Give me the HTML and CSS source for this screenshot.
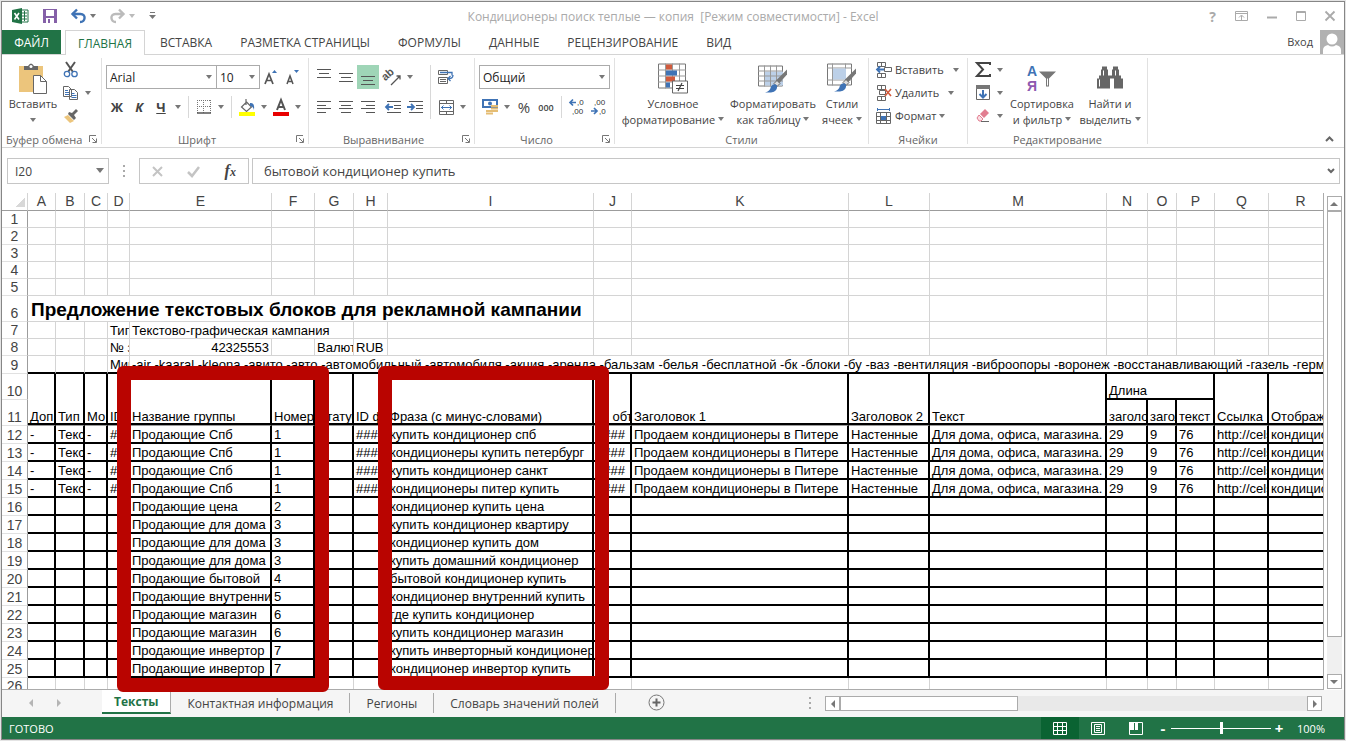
FILE: index.html
```html
<!DOCTYPE html>
<html lang="ru">
<head>
    <meta charset="UTF-8">
    <meta name="viewport" content="width=device-width, initial-scale=1.0">
    <title>Кондиционеры поиск теплые — копия - Excel</title>
    <link rel="stylesheet" href="styles.css">
</head>

<body>
    <div class="window">
        <header class="titlebar">
            <div class="quick">
                <svg width="17" height="16" viewBox="0 0 17 16"><path d="M9 2h7v12H9z" fill="#fff" stroke="#217346"/><path d="M10 5h5M10 8h5M10 11h5M12.500 3v10" stroke="#217346"/><path d="M0 2l10-2v16L0 14z" fill="#217346"/><path d="M2.500 5l4.500 6.500M7 5l-4.500 6.500" stroke="#fff" stroke-width="1.600"/></svg>
                <button class="plain" aria-label="Сохранить"><svg width="14" height="14" viewBox="0 0 14 14"><path d="M0 0h14v14H0z" fill="#8560a8"/><path d="M3 1h8v6H3zM3 9h8v5H3z" fill="#fff"/><path d="M5 10h2v4H5z" fill="#8560a8"/></svg></button>
                <button class="plain" aria-label="Отменить"><svg width="15" height="14" viewBox="0 0 15 14"><path d="M1.500 5h8c6 0 5 8-.5 8" fill="none" stroke="#3f73b5" stroke-width="2.400"/><path d="M6 .5L1.500 5 6 9.500" fill="none" stroke="#3f73b5" stroke-width="2.400"/></svg><i class="caret"></i></button>
                <button class="plain pale" aria-label="Вернуть"><svg width="15" height="14" viewBox="0 0 15 14"><path d="M13.500 5h-8c-6 0-5 8 .5 8M9 .5L13.500 5 9 9.500" fill="none" stroke="#bbb" stroke-width="2.400"/></svg><i class="caret"></i></button>
                <button class="plain" aria-label="Настройка панели"><svg width="7" height="8" viewBox="0 0 7 8"><path d="M1 .5h5" stroke="#777"/><path d="M0 3h7L3.500 7z" fill="#777"/></svg></button>
            </div>
            <div class="title">Кондиционеры поиск теплые — копия&nbsp; [Режим совместимости] - Excel</div>
            <div class="winbuttons">
                <button class="plain help">?</button>
                <button class="plain" aria-label="Лента"><svg width="13" height="10" viewBox="0 0 13 10"><path d="M.5.5h12v9H.5zM.5 2.500h12M6.500 9V4.500M4 6.500l2.500-2.500L9 6.500" fill="none" stroke="#aaa"/></svg></button>
                <button class="plain" aria-label="Свернуть"><svg width="10" height="10" viewBox="0 0 10 10"><path d="M0 6.500h10" stroke="#aaa" stroke-width="2"/></svg></button>
                <button class="plain" aria-label="Развернуть"><svg width="10" height="10" viewBox="0 0 10 10"><path d="M.5.5h9v9h-9zM0 1.500h10" fill="none" stroke="#aaa"/></svg></button>
                <button class="plain" aria-label="Закрыть"><svg width="10" height="10" viewBox="0 0 10 10"><path d="M.5.5l9 9M9.500.5l-9 9" stroke="#aaa" stroke-width="1.800"/></svg></button>
            </div>
        </header>

        <nav class="tabs">
            <button class="tab file">ФАЙЛ</button>
            <button class="tab active">ГЛАВНАЯ</button>
            <button class="tab">ВСТАВКА</button>
            <button class="tab">РАЗМЕТКА СТРАНИЦЫ</button>
            <button class="tab">ФОРМУЛЫ</button>
            <button class="tab">ДАННЫЕ</button>
            <button class="tab">РЕЦЕНЗИРОВАНИЕ</button>
            <button class="tab">ВИД</button>
            <a class="login" href="#">Вход</a>
            <svg width="24" height="24" viewBox="0 0 24 24"><path d="M0 0h24v24H0z" fill="#b1b1b1"/><circle cx="12" cy="9" r="5.500" fill="#fff"/><path d="M3 24v-4q0-4 5-5 4 3 8 0 5 1 5 5v4z" fill="#fff"/></svg>
        </nav>

        <div class="ribbon">
            <section class="group clipboard">
                <div class="body">
                    <button class="big">
                        <svg width="28" height="32" viewBox="0 0 28 32"><path d="M0 3h24v26H0z" fill="#ecc57c"/><path d="M5 7V3h4q3-5 6 0h4v4z" fill="#666"/><circle cx="12" cy="3.500" r="1.500" fill="#fff"/><path d="M14.500 12.500h7l6 6v12h-13z" fill="#fff" stroke="#666"/><path d="M21.500 12.500v6h6" fill="none" stroke="#666"/></svg>
                        <span>Вставить</span><i class="caret"></i>
                    </button>
                    <div class="stack">
                        <div class="row"><button class="tool" aria-label="Вырезать"><svg width="16" height="16" viewBox="0 0 16 16"><path d="M3 0l7 10M12 0L5 10" stroke="#555" stroke-width="2"/><circle cx="4" cy="12" r="2.700" fill="none" stroke="#3f73b5" stroke-width="1.300"/><circle cx="11.500" cy="12" r="2.700" fill="none" stroke="#3f73b5" stroke-width="1.300"/></svg></button></div>
                        <div class="row"><button class="tool" aria-label="Копировать"><svg width="16" height="14" viewBox="0 0 16 14"><path d="M.5.5h5l3 3v7h-8zM6.500 3.500h5l3 3v7h-8z" fill="#fff" stroke="#666"/><path d="M2 4.500h3M2 6.500h4M2 8.500h4M8.500 7.500h3M8.500 9.500h5M8.500 11.500h5" stroke="#3f73b5"/></svg></button><i class="caret drop"></i></div>
                        <div class="row"><button class="tool" aria-label="Формат по образцу"><svg width="16" height="14" viewBox="0 0 16 14"><path d="M1 8l4-2 6 6-4 2z" fill="#ecc57c"/><path d="M5 5l6 6 2-2-2-3 4-4-2-2-4 4-3-1z" fill="#666"/></svg></button></div>
                    </div>
                </div>
                <footer><span>Буфер обмена</span><svg class="launch" width="8" height="8" viewBox="0 0 8 8"><path d="M.5 7V.5H7M3 3l4 4M7.500 3.500v4h-4" fill="none" stroke="#777"/></svg></footer>
            </section>

            <section class="group font">
                <div class="body lines">
                    <div class="row">
                        <span class="combo name"><select aria-label="Шрифт"><option>Arial</option></select></span>
                        <span class="combo size"><select aria-label="Размер"><option>10</option></select></span>
                        <button class="tool" aria-label="Увеличить"><svg width="14" height="16" viewBox="0 0 14 16"><path d="M1 15L5 5l4 10M2.500 11.500h5" fill="none" stroke="#555" stroke-width="1.700"/><path d="M8 4l2.500-3L13 4z" fill="#3f73b5"/></svg></button>
                        <button class="tool" aria-label="Уменьшить"><svg width="14" height="16" viewBox="0 0 14 16"><path d="M1 15l3-8 3 8M2 12.500h4" fill="none" stroke="#555" stroke-width="1.500"/><path d="M8 1h5l-2.500 3z" fill="#3f73b5"/></svg></button>
                    </div>
                    <div class="row">
                        <button class="tool letter">Ж</button><button class="tool letter"><em>К</em></button><button class="tool letter"><u>Ч</u></button><i class="caret drop"></i>
                        <i class="sep"></i>
                        <button class="tool" aria-label="Границы"><svg width="14" height="14" viewBox="0 0 14 14"><path d="M0 .5h14M.5 0v13M13.500 0v13M6.500 0v13M0 6.500h14" stroke="#777" stroke-dasharray="1 1"/><path d="M0 13h14" stroke="#555" stroke-width="1.500"/></svg></button><i class="caret drop"></i>
                        <i class="sep"></i>
                        <button class="tool" aria-label="Заливка"><svg width="17" height="17" viewBox="0 0 17 17"><path d="M7.500 3l5 5-5 4.500-5-4.500zM7 6V0" fill="#fff" stroke="#666" stroke-width="1.200"/><path d="M11 4q5-1 4 7-1-4-4-4z" fill="#3f73b5"/><path d="M0 13h16v4H0z" fill="#ff0"/></svg></button><i class="caret drop"></i>
                        <button class="tool" aria-label="Цвет текста"><svg width="16" height="17" viewBox="0 0 16 17"><path d="M4 11l4-10 4 10M5.500 8h5" fill="none" stroke="#555" stroke-width="2"/><path d="M0 13h16v4H0z" fill="#e80000"/></svg></button><i class="caret drop"></i>
                    </div>
                </div>
                <footer><span>Шрифт</span><svg class="launch" width="8" height="8" viewBox="0 0 8 8"><path d="M.5 7V.5H7M3 3l4 4M7.500 3.500v4h-4" fill="none" stroke="#777"/></svg></footer>
            </section>

            <section class="group align">
                <div class="body">
                    <div class="lines">
                        <div class="row">
                            <button class="tool" aria-label="По верхнему краю"><svg width="14" height="16" viewBox="0 0 14 16"><path d="M0 .5h14M2 4.500h10M0 8.500h14" stroke="#555"/></svg></button>
                            <button class="tool" aria-label="По середине"><svg width="14" height="16" viewBox="0 0 14 16"><path d="M0 4.500h14M2 8.500h10M0 12.500h14" stroke="#555"/></svg></button>
                            <button class="tool on" aria-label="По нижнему краю"><svg width="14" height="16" viewBox="0 0 14 16"><path d="M0 7.500h14M2 11.500h10M0 15.500h14" stroke="#555"/></svg></button>
                            <button class="tool turn" aria-label="Ориентация"><svg width="17" height="15" viewBox="0 0 17 15"><text x="-1" y="8" font-size="11" font-weight="bold" fill="#555" transform="rotate(-42 4 8)">ab</text><path d="M6 15L15 6M11.500 6H15v3.500" fill="none" stroke="#555" stroke-width="1.300"/></svg></button><i class="caret drop"></i>
                        </div>
                        <div class="row">
                            <button class="tool" aria-label="По левому краю"><svg width="14" height="12" viewBox="0 0 14 12"><path d="M0 .5h14M0 4.500h9M0 7.500h14M0 11.500h9" stroke="#555"/></svg></button>
                            <button class="tool" aria-label="По центру"><svg width="14" height="12" viewBox="0 0 14 12"><path d="M0 .5h14M2 4.500h10M0 7.500h14M2 11.500h10" stroke="#555"/></svg></button>
                            <button class="tool" aria-label="По правому краю"><svg width="14" height="12" viewBox="0 0 14 12"><path d="M0 .5h14M5 4.500h9M0 7.500h14M5 11.500h9" stroke="#555"/></svg></button>
                            <button class="tool turn" aria-label="Уменьшить отступ"><svg width="16" height="12" viewBox="0 0 16 12"><path d="M2 .5h14M9 4.500h7M9 7.500h7M2 11.500h14" stroke="#555"/><path d="M1 6h7M4 3L1 6l3 3" fill="none" stroke="#3f73b5" stroke-width="1.800"/></svg></button>
                            <button class="tool" aria-label="Увеличить отступ"><svg width="16" height="12" viewBox="0 0 16 12"><path d="M2 .5h14M9 4.500h7M9 7.500h7M2 11.500h14" stroke="#555"/><path d="M0 6h7M4 3l3 3-3 3" fill="none" stroke="#3f73b5" stroke-width="1.800"/></svg></button>
                        </div>
                    </div>
                    <i class="sep tall"></i>
                    <div class="lines">
                        <div class="row"><button class="tool" aria-label="Перенести текст"><svg width="16" height="15" viewBox="0 0 16 15"><path d="M.5.5h9v4h-9zM.5 7.500h9v6h-9zM2 9.500h6M2 11.500h6" fill="none" stroke="#666"/><path d="M2 2.500h12v3M2 2.500h6M15 5q0 4-5 3.500M12.500 6L10 8.500l2.500 2.500" fill="none" stroke="#3f73b5" stroke-width="1.300"/></svg></button></div>
                        <div class="row"><button class="tool" aria-label="Объединить"><svg width="15" height="15" viewBox="0 0 15 15"><path d="M.5.5h14v14H.5zM.5 3.500h14M.5 11.500h14M7.500.5v3M7.500 11.500v3" fill="none" stroke="#666"/><path d="M2 7.500h11M4.500 5.500l-2 2 2 2M10.500 5.500l2 2-2 2" fill="none" stroke="#3f73b5"/></svg></button><i class="caret drop"></i></div>
                    </div>
                </div>
                <footer><span>Выравнивание</span><svg class="launch" width="8" height="8" viewBox="0 0 8 8"><path d="M.5 7V.5H7M3 3l4 4M7.500 3.500v4h-4" fill="none" stroke="#777"/></svg></footer>
            </section>

            <section class="group number">
                <div class="body lines">
                    <div class="row"><span class="combo format"><select aria-label="Числовой формат"><option>Общий</option></select></span></div>
                    <div class="row">
                        <button class="tool" aria-label="Денежный формат"><svg width="17" height="16" viewBox="0 0 17 16"><path d="M1 1h14v7H1z" fill="#fff" stroke="#3f73b5" stroke-width="2"/><circle cx="8" cy="4.500" r="2" fill="#3f73b5"/><path d="M9 7h7M9 9.500h7M4 12h7M9 12h7M4 14.500h7" stroke="#e5bd74" stroke-width="2"/></svg></button><i class="caret drop"></i>
                        <button class="tool percent">%</button><button class="tool zeros">000</button>
                        <i class="sep"></i>
                        <button class="tool" aria-label="Увеличить разрядность"><svg width="16" height="16" viewBox="0 0 16 16"><path d="M1 3.500h6M4 .5l-3 3 3 3" fill="none" stroke="#3f73b5" stroke-width="1.700"/><text x="8" y="6" font-size="8" fill="#333">,0</text><text x="3" y="15" font-size="8" fill="#333">,00</text></svg></button>
                        <button class="tool" aria-label="Уменьшить разрядность"><svg width="16" height="16" viewBox="0 0 16 16"><text x="3" y="6" font-size="8" fill="#333">,00</text><path d="M0 12h6M3 9l3 3-3 3" fill="none" stroke="#3f73b5" stroke-width="1.700"/><text x="8" y="15" font-size="8" fill="#333">,0</text></svg></button>
                    </div>
                </div>
                <footer><span>Число</span><svg class="launch" width="8" height="8" viewBox="0 0 8 8"><path d="M.5 7V.5H7M3 3l4 4M7.500 3.500v4h-4" fill="none" stroke="#777"/></svg></footer>
            </section>

            <section class="group looks">
                <div class="body">
                    <button class="big wide">
                        <svg width="30" height="31" viewBox="0 0 30 31"><path d="M.5.5h27v24H.5z" fill="#fff" stroke="#777"/><path d="M0 6.500h28M0 12.500h28M0 18.500h28M7.500 0v25M14.500 0v25M21.500 0v25" stroke="#999"/><path d="M8 1h6v5H8zM8 13h9v5H8z" fill="#d05a3c"/><path d="M8 7h11v5H8zM8 19h4v5H8z" fill="#3f73b5"/><path d="M14.500 17.500h15v12h-15z" fill="#fff" stroke="#666"/><path d="M18 22h8M18 25h8M24 19.500l-4 8" stroke="#444" stroke-width="1.200"/></svg>
                        <span>Условное</span><span>форматирование<i class="caret"></i></span>
                    </button>
                    <button class="big mid">
                        <svg width="30" height="31" viewBox="0 0 30 31"><path d="M.5 2.500h24v20H.5z" fill="#fff" stroke="#777"/><path d="M7 8h18v14H7z" fill="#bcd0e8"/><path d="M0 7.500h25M0 12.500h25M0 17.500h25M6.500 2v21M12.500 2v21M18.500 2v21" stroke="#999"/><path d="M29 6v5l-8 9-3-3z" fill="#777"/><path d="M19 17l3 3-3 3-3-3z" fill="#ddd" stroke="#666"/><path d="M7 29q5-1 6-6 3-4 6-1 1 6-6 7z" fill="#3f73b5"/></svg>
                        <span>Форматировать</span><span>как таблицу<i class="caret"></i></span>
                    </button>
                    <button class="big narrow">
                        <svg width="30" height="31" viewBox="0 0 30 31"><path d="M.5.5h24v21H.5z" fill="#fff" stroke="#777"/><path d="M0 4.500h25M0 16.500h25M5.500 0v22M18.500 0v22" stroke="#999"/><path d="M6 5h13v11H6z" fill="#bcd0e8"/><path d="M29 5v5l-8 9-3-3z" fill="#777"/><path d="M19 16l3 3-3 3-3-3z" fill="#ddd" stroke="#666"/><path d="M7 28q5-1 6-6 3-4 6-1 1 6-6 7z" fill="#3f73b5"/></svg>
                        <span>Стили</span><span>ячеек<i class="caret"></i></span>
                    </button>
                </div>
                <footer><span>Стили</span></footer>
            </section>

            <section class="group cells">
                <div class="body">
                    <div class="stack">
                        <button class="item"><svg width="16" height="16" viewBox="0 0 16 16"><path d="M1.500.5h8v4h-8zM5.500.5v4M1.500 11.500h8v4h-8zM5.500 11.500v4M8.500 5.500h7v4h-7z" fill="#fff" stroke="#666"/><path d="M1 7.500h7M4 4.500l-3 3 3 3" fill="none" stroke="#3f73b5" stroke-width="1.800"/></svg><span>Вставить</span><i class="caret"></i></button>
                        <button class="item"><svg width="16" height="16" viewBox="0 0 16 16"><path d="M1.500.5h8v4h-8zM5.500.5v4M1.500 11.500h8v4h-8zM5.500 11.500v4M3.500 5.500h6v4h-6z" fill="#fff" stroke="#666"/><path d="M9 4l6 7M15 4l-6 7" stroke="#d05a3c" stroke-width="1.600"/></svg><span>Удалить</span><i class="caret"></i></button>
                        <button class="item"><svg width="16" height="16" viewBox="0 0 16 16"><path d="M.5 4.500h14v11H.5zM.5 8.500h14M.5 12.500h14M4.500 4.500v11M10.500 4.500v11" fill="#fff" stroke="#666"/><path d="M5 8h5v4H5z" fill="#3f73b5"/><path d="M1.500 0v3M13.500 0v3M2 1.500h11" stroke="#3f73b5"/></svg><span>Формат</span><i class="caret close"></i></button>
                    </div>
                </div>
                <footer><span>Ячейки</span></footer>
            </section>

            <section class="group edit">
                <div class="body">
                    <div class="stack">
                        <div class="row"><button class="tool" aria-label="Сумма"><svg width="16" height="15" viewBox="0 0 16 15"><path d="M15 3V1H2l6 6.500L2 14h13v-2" fill="none" stroke="#444" stroke-width="2"/></svg></button><i class="caret drop"></i></div>
                        <div class="row"><button class="tool" aria-label="Заполнить"><svg width="14" height="15" viewBox="0 0 14 15"><path d="M.5.5h13v14H.5z" fill="#fff" stroke="#666"/><path d="M0 0h14v4H0z" fill="#777"/><path d="M7 5v7M3.500 9L7 12.500 10.500 9" fill="none" stroke="#3f73b5" stroke-width="2"/></svg></button><i class="caret drop"></i></div>
                        <div class="row"><button class="tool" aria-label="Очистить"><svg width="14" height="13" viewBox="0 0 14 13"><path d="M4 5l5-5 4 4-5 5z" fill="#e27d90"/><path d="M3 6l4 4-2 2H3L1 9z" fill="#fbdde2" stroke="#e27d90"/><path d="M5 12.500h8" stroke="#666"/></svg></button><i class="caret drop"></i></div>
                    </div>
                    <button class="big sort">
                        <svg width="30" height="31" viewBox="0 0 30 31"><text x="0" y="12" font-size="14" font-weight="bold" fill="#3f73b5">А</text><text x="0" y="27" font-size="14" font-weight="bold" fill="#8e59b0">Я</text><path d="M12 8h17l-7 7v8h-3v-8z" fill="#777"/><path d="M20.500 15v7" stroke="#fff"/></svg>
                        <span>Сортировка</span><span>и фильтр<i class="caret"></i></span>
                    </button>
                    <button class="big find">
                        <svg width="26" height="31" viewBox="0 0 26 31"><path d="M5 3h5v3h1v6h4V6h1V3h5v3h1v6h2v3h2v10h-9v-10h-4v10H0V15h2v-3h2V6h1z" fill="#666"/><path d="M2.500 16v7M16.500 17v6M6.500 7v5M18.500 7v5" stroke="#fff"/></svg>
                        <span>Найти и</span><span>выделить<i class="caret"></i></span>
                    </button>
                </div>
                <footer><span>Редактирование</span></footer>
            </section>
            <button class="plain collapse" aria-label="Свернуть ленту"><svg width="9" height="6" viewBox="0 0 9 6"><path d="M1 5l3.500-3.500L8 5" fill="none" stroke="#666" stroke-width="2"/></svg></button>
        </div>

        <div class="formulabar">
            <span class="combo cellname"><input aria-label="Имя" value="I20"></span>
            <i class="dots"></i>
            <div class="fx">
                <button class="plain" aria-label="Отмена"><svg width="11" height="11" viewBox="0 0 11 11"><path d="M1 1l9 9M10 1l-9 9" stroke="#c4c4c4" stroke-width="2"/></svg></button>
                <button class="plain" aria-label="Ввод"><svg width="13" height="11" viewBox="0 0 13 11"><path d="M1 6l4 4 7-9" fill="none" stroke="#c4c4c4" stroke-width="2.500"/></svg></button>
                <button class="plain fn">f<small>x</small></button>
            </div>
            <div class="formula">
                <input aria-label="Формула" value="бытовой кондиционер купить">
                <svg width="8" height="6" viewBox="0 0 8 6"><path d="M1 1l3 3 3-3" fill="none" stroke="#666" stroke-width="2"/></svg>
            </div>
        </div>

        <main class="work">
            <div class="sheet">
                <table id="grid">
                    <colgroup></colgroup>
                    <thead></thead>
                    <tbody></tbody>
                </table>
            </div>
            <div class="vscroll">
                <button class="arrow" aria-label="Вверх"><i class="up"></i></button>
                <div class="vtrack"><div class="vthumb"></div></div>
                <button class="arrow" aria-label="Вниз"><i class="down"></i></button>
            </div>
            <div class="mark groups"></div>
            <div class="mark phrases"></div>
        </main>

        <div class="sheetbar">
            <div class="nav"><i class="left"></i><i class="right"></i></div>
            <button class="sheettab current">Тексты</button>
            <button class="sheettab">Контактная информация</button>
            <button class="sheettab">Регионы</button>
            <button class="sheettab">Словарь значений полей</button>
            <button class="plain add" aria-label="Новый лист"><svg width="17" height="17" viewBox="0 0 17 17"><circle cx="8.500" cy="8.500" r="7.500" fill="none" stroke="#777"/><path d="M4.500 8.500h8M8.500 4.500v8" stroke="#666" stroke-width="2"/></svg></button>
            <i class="dots"></i>
            <div class="hscroll">
                <button class="arrow" aria-label="Влево"><i class="left"></i></button>
                <div class="hthumb"></div>
                <button class="arrow" aria-label="Вправо"><i class="right"></i></button>
            </div>
        </div>

        <footer class="status">
            <span class="ready">ГОТОВО</span>
            <button class="view on" aria-label="Обычный"><svg width="14" height="13" viewBox="0 0 14 13"><path d="M.5.5h13v12H.5zM.5 4.500h13M.5 8.500h13M4.500.5v12M9.500.5v12" fill="none" stroke="#fff"/></svg></button>
            <button class="view" aria-label="Разметка"><svg width="14" height="13" viewBox="0 0 14 13"><path d="M.5.5h13v12H.5zM3.500 2.500h7v8h-7zM5 4.500h4M5 6.500h4M5 8.500h4" fill="none" stroke="#fff"/></svg></button>
            <button class="view" aria-label="Страничный"><svg width="14" height="13" viewBox="0 0 14 13"><path d="M.5.5h13v12H.5z" fill="none" stroke="#fff"/><path d="M0 0h5v8H0zM6 0h3v8H6z" fill="#fff"/></svg></button>
            <button class="zoombtn">-</button>
            <input class="zoom" type="range" min="0" max="100" value="50" aria-label="Масштаб">
            <button class="zoombtn">+</button>
            <span class="percentage">100%</span>
        </footer>
    </div>

    <script>
        const widths = [26, 28, 29, 23, 22, 142, 43, 39, 34, 206, 38, 217, 81, 177, 41, 29, 38, 54, 64];
        const letters = "ABCDEFGHIJKLMNOPQR".split("");

        const groups = ["Спб", "Спб", "Спб", "Спб", "цена", "для дома", "для дома", "для дома", "бытовой",
            "внутренний", "магазин", "магазин", "инвертор", "инвертор"];
        const numbers = [1, 1, 1, 1, 2, 3, 3, 3, 4, 5, 6, 6, 7, 7];
        const phrases = ["купить кондиционер спб", "кондиционеры купить петербург", "купить кондиционер санкт",
            "кондиционеры питер купить", "кондиционер купить цена", "купить кондиционер квартиру",
            "кондиционер купить дом", "купить домашний кондиционер", "бытовой кондиционер купить",
            "кондиционер внутренний купить", "где купить кондиционер", "купить кондиционер магазин",
            "купить инверторный кондиционер", "кондиционер инвертор купить"];
        const minus = "-air -kaaral -kleona -авито -авто -автомобильный -автомобиля -акция -аренда -бальзам -белья " +
            "-бесплатной -бк -блоки -бу -ваз -вентиляция -виброопоры -воронеж -восстанавливающий -газель -герметик";

        const td = (text = "", attrs = "") => `<td ${attrs}>${text}</td>`;
        const empty = n => td().repeat(n);
        const row = (n, cells, cls = "") => `<tr class="${cls}"><th scope="row">${n}</th>${cells}</tr>`;

        document.querySelector("#grid colgroup").innerHTML = widths.map(w => `<col style="width:${w}px">`).join("");
        document.querySelector("#grid thead").innerHTML =
            `<tr><th class="corner"></th>${letters.map(l => `<th scope="col">${l}</th>`).join("")}</tr>`;

        let html = "";
        for (let i = 1; i <= 5; i++) html += row(i, empty(18));
        html += row(6, td("Предложение текстовых блоков для рекламной кампании", 'colspan="9"') + empty(9), "heading");
        html += row(7, empty(3) + td("Тип:") + td("Текстово-графическая кампания", 'colspan="3"') + empty(11));
        html += row(8, empty(3) + td("№ заказа") + td("42325553", 'class="num"') + empty(1) + td("Валюта") + td("RUB") + empty(10));
        html += row(9, empty(3) + td("Минус") + td(minus, 'colspan="14"'), "minus");

        // two-line table header
        const heads = ["Доп", "Тип", "Мо", "ID группы", "Название группы", "Номер", "Статус", "ID фразы",
            "Фраза (с минус-словами)", "ID объявления", "Заголовок 1", "Заголовок 2", "Текст"];
        html += row(10, heads.map(t => td(t, 'rowspan="2" class="freeze"')).join("") + td("Длина", 'colspan="3"') +
            td("Ссылка", 'rowspan="2" class="freeze"') + td("Отображаемая", 'rowspan="2" class="freeze"'), "bold head");
        html += row(11, ["заголовок", "заголовок", "текст"].map(t => td(t, 'class="freeze"')).join(""), "bold head");

        groups.forEach((g, i) => {
            const full = i < 4;
            const f = t => td(full ? t : "");
            html += row(12 + i, f("-") + f("Текстовое") + f("-") + f("##") +
                td("Продающие " + g) + td(numbers[i]) + td() + f("####") + td(phrases[i]) + f("####") +
                f("Продаем кондиционеры в Питере") + f("Настенные") + f("Для дома, офиса, магазина.") +
                f("29") + f("9") + f("76") + f("http://celsius") + f("кондиционеры"), "bold");
        });
        html += row(26, empty(18));
        document.querySelector("#grid tbody").innerHTML = html;
    </script>
</body>

</html>
```
FILE: styles.css
```css
* {
    box-sizing: border-box;
}
body {
    margin: 0;
    padding: 1px;
    height: 100vh;
    overflow: hidden;
    background-color: #e4e4e4;
    font-family: "Open Sans", "Noto Sans", sans-serif;
    font-size: 12px;
    color: #444;
}
button, input, select {
    margin: 0;
    padding: 0;
    border: 0;
    background: none;
    font: inherit;
    color: inherit;
}
svg {
    display: block;
    flex: none;
    overflow: visible;
}
svg text {
    font-family: "Liberation Sans", Arial, sans-serif;
}
.window {
    height: 100%;
    display: flex;
    flex-direction: column;
    background-color: #fff;
    border: 1px solid #868686;
}

/* small triangles */
.caret {
    flex: none;
    display: inline-block;
    border: 3px solid transparent;
    border-top: 4px solid #777;
    border-bottom: 0;
}
.pale .caret {
    border-top-color: #bbb;
}
.row .drop {
    margin: 0 3px;
}
.up, .down, .left, .right {
    display: block;
    border: 4px solid transparent;
}
.up {
    border-top: 0;
    border-bottom-color: #777;
}
.down {
    border-bottom: 0;
    border-top-color: #777;
}
.left {
    border-left: 0;
    border-right-color: #777;
}
.right {
    border-right: 0;
    border-left-color: #777;
}
.dots {
    width: 2px;
    height: 12px;
    background: repeating-linear-gradient(#aaa 0 2px, transparent 2px 5px);
}

/* title bar */
.titlebar {
    height: 28px;
    display: grid;
    grid-template-columns: 1fr auto 1fr;
    align-items: center;
}
.quick {
    display: flex;
    align-items: center;
    gap: 14px;
    padding-left: 10px;
}
.quick .plain {
    display: flex;
    align-items: center;
    gap: 4px;
}
.title {
    color: #aaa;
}
.winbuttons {
    display: flex;
    justify-content: flex-end;
    align-items: center;
    gap: 19px;
    padding-right: 9px;
}
.help {
    font-size: 14px;
    font-weight: bold;
    color: #aaa;
}

/* tabs */
.tabs {
    height: 25px;
    display: flex;
    align-items: stretch;
    border-bottom: 1px solid #d4d4d4;
}
.tab {
    padding: 0 14px;
}
.file {
    width: 59px;
    padding: 0;
    margin-right: 4px;
    background-color: #217346;
    color: #fff;
}
.tab.active {
    width: 80px;
    padding: 0;
    margin: 0 1px -1px 0;
    border: 1px solid #d4d4d4;
    border-bottom: 0;
    background-color: #fff;
    color: #217346;
}
.login {
    margin: 0 7px 0 auto;
    font-size: 11px;
    line-height: 24px;
    color: #444;
    text-decoration: none;
}

/* ribbon */
.ribbon {
    height: 93px;
    flex: none;
    display: flex;
    padding: 3px 0;
    border-bottom: 1px solid #d4d4d4;
    font-size: 11px;
}
.group {
    flex: none;
    display: flex;
    flex-direction: column;
    justify-content: space-between;
    border-right: 1px solid #e1e1e1;
}
.clipboard {
    width: 100px;
}
.font {
    width: 207px;
}
.align {
    width: 166px;
}
.number {
    width: 140px;
}
.looks {
    width: 254px;
}
.cells {
    width: 99px;
}
.edit {
    width: 180px;
}
.body {
    display: flex;
    padding-left: 4px;
}
.group footer {
    display: flex;
    align-items: center;
    justify-content: center;
    height: 16px;
    margin-bottom: -3px;
    padding: 0 4px;
    color: #666;
}
.group footer span {
    flex: 1;
    min-width: 0;
    text-align: center;
    white-space: nowrap;
}
.launch {
    margin-left: 8px;
}
.row {
    display: flex;
    align-items: center;
}
.lines {
    display: flex;
    flex-direction: column;
    gap: 6px;
}
.body.lines, .body > .lines {
    padding-top: 7px;
}
.lines .row {
    height: 24px;
}
.stack .row, .item {
    height: 23px;
}
.tool {
    flex: none;
    width: 22px;
    height: 24px;
    display: flex;
    align-items: center;
    justify-content: center;
}
.on {
    background-color: #9fd5b7;
}
.turn {
    margin-left: 3px;
}
.letter {
    font-size: 13px;
    font-weight: bold;
}
.percent {
    font-size: 15px;
}
.zeros {
    font-size: 9px;
    font-weight: 600;
}
.sep {
    width: 1px;
    height: 22px;
    margin: 0 4px;
    background-color: #d8d8d8;
}
.tall {
    height: 54px;
    margin-top: 7px;
}
.combo {
    position: relative;
    display: flex;
    height: 24px;
    border: 1px solid #ababab;
    font-size: 12px;
    color: #222;
}
.combo::after {
    content: "";
    position: absolute;
    top: 9px;
    right: 4px;
    border: 3px solid transparent;
    border-top: 4px solid #777;
    border-bottom: 0;
    pointer-events: none;
}
.combo select, .combo input {
    appearance: none;
    width: 100%;
    padding-left: 3px;
    outline: none;
}
.name {
    width: 111px;
}
.size {
    width: 43px;
    border-left: 0;
}
.format {
    width: 131px;
}
.big {
    display: flex;
    flex-direction: column;
    align-items: center;
    width: 54px;
    padding-top: 4px;
    line-height: 16px;
    white-space: nowrap;
}
.big svg {
    height: 34px;
}
.big > .caret {
    margin-top: 6px;
}
.big span .caret {
    margin: 0 0 3px 3px;
}
.wide {
    width: 108px;
}
.mid {
    width: 92px;
}
.narrow {
    width: 46px;
}
.sort {
    width: 72px;
}
.find {
    width: 64px;
}
.item {
    display: flex;
    align-items: center;
    gap: 3px;
    margin-left: 3px;
}
.item .caret {
    margin-left: 6px;
}
.item .close {
    margin-left: 0;
}
.collapse {
    margin: auto 10px 2px auto;
}

/* formula bar */
.formulabar {
    flex: none;
    display: flex;
    align-items: center;
    padding: 10px 4px 9px 5px;
}
.cellname {
    width: 102px;
    height: 26px;
    border-color: #c6c6c6;
}
.cellname::after {
    border-width: 5px 4px 0;
}
.cellname input {
    padding-left: 7px;
    color: #444;
}
.formulabar .dots {
    margin: 0 14px;
}
.fx {
    display: flex;
    justify-content: space-around;
    align-items: center;
    width: 110px;
    height: 26px;
    margin-right: 3px;
    border: 1px solid #c6c6c6;
}
.fn {
    font-family: "Liberation Serif", serif;
    font-size: 16px;
    font-style: italic;
    font-weight: bold;
}
.fn small {
    font-size: 12px;
}
.formula {
    flex: 1;
    display: flex;
    align-items: center;
    height: 26px;
    padding: 0 4px 0 11px;
    border: 1px solid #c6c6c6;
}
.formula input {
    flex: 1;
    font-size: 13px;
    outline: none;
}

/* sheet */
.work {
    position: relative;
    flex: 1;
    min-height: 0;
    display: flex;
}
.sheet {
    flex: 1;
    min-width: 0;
    overflow: hidden;
    border-right: 1px solid #ababab;
    border-bottom: 1px solid #ababab;
}
table {
    table-layout: fixed;
    width: 1331px;
    border-collapse: separate;
    border-spacing: 0;
    font-family: "Liberation Sans", Arial, sans-serif;
    font-size: 13px;
    line-height: 15px;
    color: #000;
}
th {
    padding: 0;
    font-weight: normal;
    font-size: 14px;
    color: #444;
    border-right: 1px solid #d4d4d4;
}
thead th {
    height: 18px;
    border-bottom: 1px solid #9c9c9c;
}
.corner {
    background: linear-gradient(135deg, transparent 50%, #d8d8d8 50%) no-repeat 14px 5px / 9px 9px;
}
tbody th {
    border-right-color: #9c9c9c;
    border-bottom: 1px solid #e1e1e1;
    vertical-align: bottom;
}
td {
    height: 17px;
    padding: 0 0 0 2px;
    overflow: hidden;
    white-space: nowrap;
    vertical-align: bottom;
    border-right: 1px solid #d4d4d4;
    border-bottom: 1px solid #d4d4d4;
}
.num {
    padding-right: 2px;
    text-align: right;
}
.heading td {
    height: 26px;
    padding-left: 3px;
    font-size: 19px;
    line-height: 22px;
    font-weight: bold;
}
.minus td {
    height: 18px;
    border-bottom: 2px solid #000;
}
.bold td {
    height: 18px;
    border-right: 2px solid #000;
    border-bottom: 2px solid #000;
}
.head td {
    height: 26px;
}
.head .freeze {
    border-bottom: 1px solid #9c9c9c;
    box-shadow: inset 0 -2px #000;
    padding-bottom: 1px;
}
.vscroll {
    width: 20px;
    display: flex;
    flex-direction: column;
    align-items: center;
    padding: 3px 0 1px;
}
.arrow {
    flex: none;
    width: 15px;
    height: 15px;
    display: flex;
    align-items: center;
    justify-content: center;
    background-color: #fff;
    border: 1px solid #ababab;
}
.vtrack {
    flex: 1;
    width: 15px;
    background-color: #f0f0f0;
}
.vthumb {
    height: 92%;
    background-color: #fff;
    border: 1px solid #ababab;
}

/* red frames over the columns */
.mark {
    position: absolute;
    top: 173px;
    border: 14px solid #b90400;
    border-radius: 6px;
    z-index: 1;
}
.groups {
    left: 115px;
    width: 212px;
    height: 326px;
}
.phrases {
    left: 376px;
    width: 231px;
    height: 324px;
}

/* sheet tabs */
.sheetbar {
    flex: none;
    height: 27px;
    display: flex;
    align-items: flex-start;
    background-color: #f5f5f5;
}
.nav {
    display: flex;
    gap: 24px;
    width: 100px;
    padding: 9px 0 0 27px;
    opacity: .5;
}
.sheettab {
    height: 20px;
    margin-top: 3px;
    padding: 0 16px;
    border-right: 1px solid #ababab;
}
.current {
    height: 24px;
    margin-top: 0;
    padding: 0 12px;
    background-color: #fff;
    border-bottom: 2px solid #217346;
    font-weight: bold;
    color: #217346;
}
.add {
    margin: 4px auto 0 32px;
}
.sheetbar .dots {
    margin: 7px 14px 0 0;
}
.hscroll {
    width: 37%;
    display: flex;
    margin: 6px 22px 0 0;
    background-color: #e9e9e9;
}
.hthumb {
    width: 178px;
    margin-right: auto;
    background-color: #fff;
    border: 1px solid #ababab;
}

/* status bar */
.status {
    flex: none;
    height: 22px;
    display: flex;
    align-items: center;
    padding-right: 19px;
    background-color: #217346;
    font-size: 11px;
    color: #fff;
}
.ready {
    margin: 0 auto 0 7px;
}
.view {
    width: 38px;
    height: 22px;
    display: flex;
    align-items: center;
    justify-content: center;
}
.view.on {
    background-color: #0a6332;
}
.zoombtn {
    width: 16px;
    font-size: 15px;
    font-weight: bold;
}
.zoom {
    appearance: none;
    width: 100px;
    height: 12px;
    background: linear-gradient(#fff, #fff) no-repeat center / 100% 1px;
}
.zoom::-webkit-slider-thumb {
    appearance: none;
    width: 3px;
    height: 12px;
    background-color: #fff;
}
.percentage {
    margin-left: 10px;
}
```
